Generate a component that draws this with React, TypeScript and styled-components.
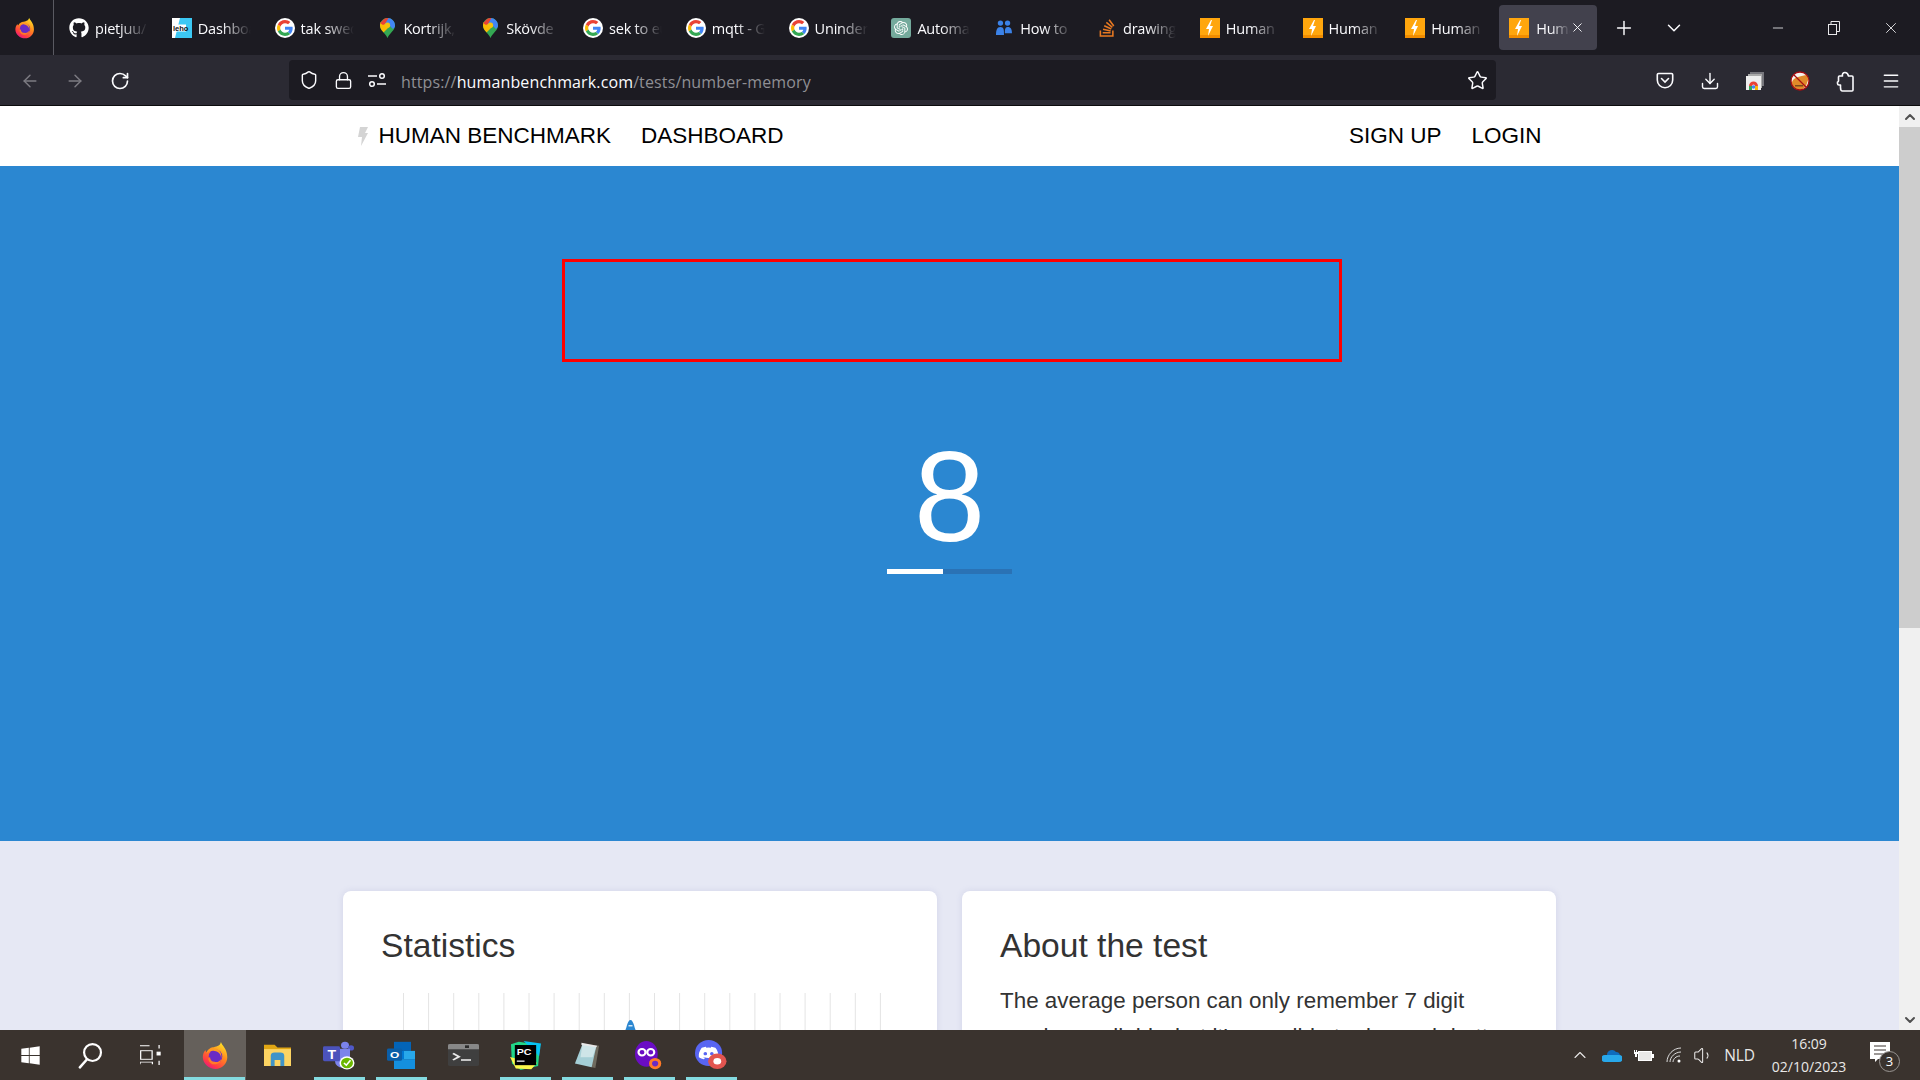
import React from "react";
import styled, { createGlobalStyle } from "styled-components";
import {
  ArrowLeft,
  ArrowRight,
  ChevronDown,
  ChevronUp,
  Download,
  Lock,
  Menu,
  Minus,
  Plus,
  RotateCw,
  Shield,
  Star,
  Volume1,
  X,
} from "lucide-react";
import { FaGithub, FaStackOverflow, FaDiscord, FaWindows } from "react-icons/fa";
import { SiOpenai } from "react-icons/si";

const GlobalStyle = createGlobalStyle`
  html, body {
    margin: 0;
    height: 100%;
    overflow: hidden;
    background: #1c1b22;
    font-family: "Liberation Sans", Arial, sans-serif;
  }
  * { box-sizing: border-box; }
`;

const Screen = styled.div`
  display: flex;
  flex-direction: column;
  width: 1920px;
  height: 1080px;
`;

/* browser chrome */
const TabBar = styled.div`
  display: flex;
  align-items: center;
  height: 55px;
  background: #1c1b22;
  color: #fbfbfe;
  font-family: "Open Sans", "Noto Sans", sans-serif;
`;

const BrandCell = styled.div`
  display: flex;
  align-items: center;
  justify-content: center;
  width: 54px;
  height: 55px;
  padding-right: 3px;
  border-right: 1px solid #5a5a62;
`;

const TabList = styled.div`
  display: flex;
  align-items: center;
  height: 45px;
`;

const Tab = styled.div<{ $active?: boolean }>`
  display: flex;
  align-items: center;
  gap: ${(p) => (p.$active ? "7px" : "6px")};
  width: ${(p) => (p.$active ? "98px" : "102.8px")};
  height: 45px;
  margin-left: ${(p) => (p.$active ? "6px" : "0")};
  padding-left: ${(p) => (p.$active ? "10px" : "15px")};
  border-radius: 4px;
  background: ${(p) => (p.$active ? "#42414d" : "transparent")};
`;

const Favicon = styled.span`
  display: flex;
  flex: none;
  align-items: center;
  justify-content: center;
  width: 20px;
  height: 20px;
`;

const TabLabel = styled.span<{ $short?: boolean }>`
  width: ${(p) => (p.$short ? "34px" : "53px")};
  padding-top: 2px;
  overflow: hidden;
  white-space: nowrap;
  font-size: 14.5px;
  letter-spacing: -0.2px;
  color: #fbfbfe;
  mask-image: linear-gradient(to right, #000 45%, transparent 100%);
`;

const TabClose = styled.span`
  display: flex;
  margin-left: -7px;
  color: #fbfbfe;
`;

const LeadButton = styled.span<{ $gap: number }>`
  display: flex;
  margin-left: ${(p) => p.$gap}px;
  color: #fbfbfe;
`;

const WindowControls = styled.div`
  display: flex;
  align-items: center;
  gap: 42px;
  margin-left: auto;
  padding-right: 20px;
  color: #e8e8ea;
`;

const Toolbar = styled.div`
  display: flex;
  align-items: center;
  height: 51px;
  padding-left: 20px;
  background: #2b2a33;
  border-bottom: 1px solid #0c0c0d;
  color: #fbfbfe;
`;

const NavButtons = styled.div`
  display: flex;
  align-items: center;
  gap: 25px;
  width: 269px;
  margin-top: 2px;
`;

const NavGlyph = styled.span<{ $dim?: boolean }>`
  display: flex;
  color: ${(p) => (p.$dim ? "#7d7c83" : "#fbfbfe")};
`;

const UrlBar = styled.div`
  display: flex;
  align-items: center;
  width: 1207px;
  height: 40px;
  padding: 0 8px 0 10px;
  border-radius: 4px;
  background: #1c1b22;
`;

const UrlIcons = styled.div`
  display: flex;
  align-items: center;
  gap: 15px;
  width: 102px;
`;

const UrlText = styled.div`
  padding-top: 3px;
  font-family: "Open Sans", "Noto Sans", sans-serif;
  font-size: 16px;
  letter-spacing: 0.13px;
  color: #8f8f94;
  b {
    font-weight: 400;
    color: #fbfbfe;
  }
`;

const BookmarkStar = styled.span`
  display: flex;
  margin-left: auto;
`;

const ToolbarActions = styled.div`
  display: flex;
  align-items: center;
  margin-left: 146px;
  margin-top: 2px;
`;

const ActionSlot = styled.span`
  display: flex;
  justify-content: center;
  width: 45.2px;
`;

/* page */
const Viewport = styled.div`
  display: flex;
  height: 924px;
  overflow: hidden;
`;

const Page = styled.main`
  flex: 1;
  min-width: 0;
  background: #e6e8f4;
`;

const SiteNav = styled.nav`
  display: flex;
  justify-content: center;
  height: 60px;
  background: #fff;
`;

const SiteNavInner = styled.div`
  display: flex;
  align-items: center;
  gap: 30px;
  width: 1184px;
`;

const SiteLink = styled.a`
  font-size: 22.5px;
  color: #000;
`;

const Logo = styled.span`
  display: flex;
  align-items: center;
  gap: 11px;
`;

const RightLinks = styled.div`
  display: flex;
  gap: 30px;
  margin-left: auto;
`;

const Hero = styled.section`
  display: flex;
  flex-direction: column;
  align-items: center;
  height: 675px;
  padding-top: 93px;
  background: #2b87d1;
  color: #fff;
`;

const AnswerFrame = styled.div`
  width: 780px;
  height: 103px;
  margin-left: 5px;
  border: 3px solid #ff0000;
`;

const Digit = styled.div`
  margin-top: 71px;
  font-size: 128px;
  line-height: 128px;
`;

const Countdown = styled.div`
  width: 125px;
  height: 5px;
  margin-top: 8px;
  background: #2a72b5;
`;

const CountdownFill = styled.div`
  width: 45%;
  height: 100%;
  background: #fff;
`;

const Cards = styled.div`
  display: flex;
  justify-content: center;
  gap: 25px;
  padding-top: 50px;
`;

const Card = styled.article`
  width: 594px;
  height: 500px;
  padding: 33px 38px;
  border-radius: 8px;
  background: #fff;
  box-shadow: 0 0 6px rgba(120, 130, 190, 0.18);
  color: #333;
`;

const CardTitle = styled.h2`
  margin: 0;
  font-size: 33.6px;
  font-weight: 400;
  line-height: 44px;
`;

const CardText = styled.p`
  margin: 15px 0 0;
  font-size: 22.4px;
  line-height: 36px;
`;

const Chart = styled.svg`
  display: block;
  margin: 25px 0 0 22px;
`;

const Scrollbar = styled.div`
  display: flex;
  flex: none;
  flex-direction: column;
  width: 21px;
  background: #f0f0f0;
`;

const ScrollStep = styled.div`
  display: flex;
  flex: none;
  align-items: center;
  justify-content: center;
  height: 21px;
  color: #505050;
`;

const ScrollThumb = styled.div`
  height: 501px;
  background: #cdcdcd;
`;

const ScrollRest = styled.div`
  flex: 1;
`;

/* windows taskbar */
const Taskbar = styled.footer`
  display: flex;
  align-items: stretch;
  height: 50px;
  background: #3a332e;
  color: #fff;
  font-family: "Open Sans", "Noto Sans", sans-serif;
`;

const SystemSlot = styled.div`
  display: flex;
  align-items: center;
  justify-content: center;
  width: 60px;
`;

const AppList = styled.div`
  display: flex;
  margin-left: 4px;
`;

const TaskSlot = styled.div<{ $active?: boolean; $running?: boolean }>`
  position: relative;
  display: flex;
  align-items: center;
  justify-content: center;
  width: 62px;
  background: ${(p) => (p.$active ? "#65605b" : "transparent")};
  &::after {
    content: "";
    display: ${(p) => (p.$running || p.$active ? "block" : "none")};
    position: absolute;
    left: ${(p) => (p.$active ? "0" : "5.5px")};
    right: ${(p) => (p.$active ? "1px" : "5.5px")};
    bottom: 0;
    height: 3px;
    background: #84dbe0;
  }
`;

const Tray = styled.div`
  display: flex;
  align-items: center;
  gap: 12px;
  margin-left: auto;
  padding-right: 4px;
`;

const Lang = styled.span`
  margin-left: -2px;
  font-size: 15.5px;
  letter-spacing: -0.1px;
  color: #e9e8e7;
`;

const Clock = styled.div`
  width: 84px;
  font-size: 14px;
  line-height: 23px;
  text-align: center;
  color: #e9e8e7;
`;

const Notify = styled.div`
  position: relative;
  width: 20px;
  height: 20px;
  margin: 0 26px 6px 7px;
`;

const NotifyBadge = styled.span`
  position: absolute;
  top: 9px;
  left: 9px;
  width: 21px;
  height: 21px;
  border: 1px solid #9a9693;
  border-radius: 50%;
  background: #3a332e;
  font-size: 13px;
  line-height: 19px;
  text-align: center;
  color: #fff;
`;

const GoogleIcon = () => (
  <svg width="20" height="20" viewBox="-6 -6 60 60">
    <circle cx="24" cy="24" r="30" fill="#fff" />
    <path fill="#EA4335" d="M24 9.5c3.54 0 6.71 1.22 9.21 3.6l6.85-6.85C35.9 2.38 30.47 0 24 0 14.62 0 6.51 5.38 2.56 13.22l7.98 6.19C12.43 13.72 17.74 9.5 24 9.5z" />
    <path fill="#4285F4" d="M46.98 24.55c0-1.57-.15-3.09-.38-4.55H24v9.02h12.94c-.58 2.96-2.26 5.48-4.78 7.18l7.73 6c4.51-4.18 7.09-10.36 7.09-17.65z" />
    <path fill="#FBBC05" d="M10.53 28.59c-.48-1.45-.76-2.99-.76-4.59s.27-3.14.76-4.59l-7.98-6.19C.92 16.46 0 20.12 0 24c0 3.88.92 7.54 2.56 10.78l7.97-6.19z" />
    <path fill="#34A853" d="M24 48c6.48 0 11.93-2.13 15.89-5.81l-7.73-6c-2.15 1.45-4.92 2.3-8.16 2.3-6.26 0-11.57-4.22-13.47-9.91l-7.98 6.19C6.51 42.62 14.62 48 24 48z" />
  </svg>
);

const MapsIcon = () => (
  <svg width="15" height="20" viewBox="0 0 15 20">
    <defs>
      <clipPath id="pinShape">
        <path d="M7.500 0C3.400 0 0 3.300 0 7.500c0 5 5 7 7.500 12.500C10 14.500 15 12.500 15 7.500 15 3.300 11.600 0 7.500 0z" />
      </clipPath>
    </defs>
    <g clipPath="url(#pinShape)">
      <rect width="15" height="20" fill="#34a853" />
      <path fill="#fbbc04" d="M0 4h5l5 4-7 7-3-2z" />
      <path fill="#ea4335" d="M0 5L6-1h4L5 6 3 7z" />
      <path fill="#4285f4" d="M9-1h7v9l-3 3-3-3-5-2z" />
      <circle cx="7.500" cy="7.200" r="2.600" fill="#f4c20d" />
    </g>
  </svg>
);

const LehoIcon = () => (
  <svg width="20" height="20" viewBox="0 0 20 20">
    <rect width="20" height="20" fill="#fff" />
    <path fill="#3cc8f4" d="M8 0h12v20H3z" />
    <path fill="#fff" d="M0 6.500h14v7H0z" />
    <text x="1" y="12.500" fontSize="7.500" fontWeight="700" fontFamily="Liberation Sans" fill="#111">leho</text>
  </svg>
);

const ChatIcon = () => (
  <svg width="20" height="20" viewBox="0 0 20 20">
    <rect width="20" height="20" rx="3" fill="#74aa9c" />
    <SiOpenai x="3" y="3" size="14" color="#fff" />
  </svg>
);

const PeopleIcon = () => (
  <svg width="18" height="16" viewBox="0 0 18 18" fill="#3b82e8">
    <circle cx="5" cy="3.500" r="3" />
    <circle cx="13" cy="3.500" r="3" />
    <path d="M0 17c0-5 1-9 5-9s4 3 4 9zM10 15c0-3 0-7 3-7 4 0 5 3 5 7z" />
  </svg>
);

const BoltIcon = () => (
  <svg width="20" height="20" viewBox="0 0 20 20">
    <rect width="20" height="20" fill="#ffa60d" />
    <rect y="17" width="20" height="3" fill="#f08c00" />
    <path fill="#fff" d="M11 2L6 11h3l-1 7 5-10h-3l2-6z" />
  </svg>
);

const FirefoxIcon = ({ size }: { size: number }) => (
  <svg width={size} height={size} viewBox="0 0 32 32">
    <defs>
      <linearGradient id="fxBody" x1="0.8" y1="0.05" x2="0.25" y2="1">
        <stop offset="0" stopColor="#ffe226" />
        <stop offset="0.4" stopColor="#ff8a1e" />
        <stop offset="0.8" stopColor="#ff3a45" />
        <stop offset="1" stopColor="#e3138a" />
      </linearGradient>
    </defs>
    <path fill="url(#fxBody)" d="M22 1c1 4 7 7 7 17 0 7-6 13-13 13S2 25 2 18c0-3 1-6 3-8 0 1 .6 2 1.200 2.500C7.500 9.500 10 7.500 13 7c3-1 8-1 9-6z" />
    <circle cx="16" cy="17" r="7.500" fill="#6a2bc4" />
    <path fill="#ff9a22" d="M6 14c2-3 6-4 9-3 4 .5 8 4 7 9 2-6-2-12-8-12-4 0-7 2-8 6z" />
    <path fill="#ff7a28" d="M8 20c1 5 6 7 10 5 3-1 4-3 4-5-1 2-4 4-7 3-3 0-5-2-5-5-1 0-2 1-2 2z" />
  </svg>
);

const PocketIcon = () => (
  <svg width="18" height="18" viewBox="0 0 18 18" fill="none" stroke="#fbfbfe" strokeWidth="1.600">
    <path d="M2.500 1.500h13a1.200 1.200 0 011.200 1.200V8a7.700 7.700 0 01-15.400 0V2.700a1.200 1.200 0 011.200-1.200z" />
    <path d="M5.500 6.500L9 10l3.500-3.500" strokeLinecap="round" />
  </svg>
);

const SiteSettingsIcon = () => (
  <svg width="18" height="16" viewBox="0 0 18 16" fill="none" stroke="#fbfbfe" strokeWidth="1.500">
    <path d="M0 4h9M9 12h9" />
    <circle cx="14" cy="4" r="2.300" />
    <circle cx="4" cy="12" r="2.300" />
  </svg>
);

const ChromeStackIcon = () => (
  <svg width="18" height="18" viewBox="0 0 18 18">
    <rect x="4" y="0" width="14" height="14" fill="#77777d" />
    <rect x="2" y="2" width="14" height="14" fill="#aaa" />
    <rect x="0" y="4" width="15" height="14" fill="#eee" />
    <path fill="#ea4335" d="M3 14a4.500 4.500 0 019 0H9a1.500 1.500 0 00-3 0z" />
    <path fill="#34a853" d="M3 14h3v4H3z" />
    <path fill="#fbbc04" d="M9 14h3v4H9z" />
    <circle cx="7.500" cy="15" r="1.800" fill="#4285f4" />
  </svg>
);

const BlockedFoxIcon = () => (
  <svg width="20" height="20" viewBox="0 0 20 20">
    <circle cx="10" cy="10" r="9" fill="#f7f3ee" />
    <path fill="#e08a2a" d="M2 12c0-3 3-5 6-6 4-1 6-2 9-2 2 3 1 6 0 8-1 4-4 7-8 7-4 0-7-3-7-7z" />
    <path fill="#7a4a1c" d="M5 14h8v1.500H5z" />
    <circle cx="10" cy="10" r="9" fill="none" stroke="#a80d12" strokeWidth="1.300" />
    <path d="M4 4l12 12" stroke="#a80d12" strokeWidth="1.300" />
  </svg>
);

const ExtensionIcon = () => (
  <svg width="18" height="21" viewBox="0 0 18 21" fill="none" stroke="#fbfbfe" strokeWidth="1.600" strokeLinejoin="round">
    <path d="M9 1.500c-2 0-3 1.500-2.500 3.500H3.500c-.6 0-1 .4-1 1v4c0 .5-.4 1-1 1v1.500c0 1 .5 1.500 1.500 1.500h1.500v2.500c0 2 .5 3.500 2 3.500h9.500c.6 0 1-.4 1-1V6c0-.6-.4-1-1-1h-3.500C12 3 11 1.500 9 1.500z" />
  </svg>
);

const RestoreIcon = () => (
  <svg width="12" height="14" viewBox="0 0 12 14" fill="none" stroke="#e8e8ea" strokeWidth="1">
    <rect x=".5" y="3.500" width="8" height="10" />
    <path d="M3 3.500V.5h8.500v10H8.500" />
  </svg>
);

const SearchIcon = () => (
  <svg width="28" height="27" viewBox="0 0 30 32" fill="none" stroke="#fff" strokeLinecap="round">
    <circle cx="18" cy="12.500" r="10" strokeWidth="2.600" />
    <path d="M11 21L3 30" strokeWidth="3" />
  </svg>
);

const TaskViewIcon = () => (
  <svg width="21" height="20" viewBox="0 0 22 28" preserveAspectRatio="none" fill="none" stroke="#fff" strokeWidth="1.300">
    <path d="M0 1h10M0 27v-3h13v3" />
    <rect x=".7" y="8" width="12" height="12" />
    <path d="M20 0v5M20 22v6" />
    <rect x="18" y="10" width="3" height="4" fill="#fff" />
  </svg>
);

const FolderIcon = () => (
  <svg width="27" height="22" viewBox="0 0 28 26" preserveAspectRatio="none">
    <path fill="#e0a614" d="M0 1h11l3 3h14v3H0z" />
    <path fill="#fcd462" d="M0 6h28v20H0z" />
    <path fill="#3f94c8" d="M7 26V14a4 4 0 014-4h6a4 4 0 014 4v12h-4v-7h-6v7z" />
  </svg>
);

const TeamsIcon = () => (
  <svg width="32" height="30" viewBox="0 0 32 34" preserveAspectRatio="none">
    <circle cx="22" cy="6" r="4" fill="#7b83eb" />
    <circle cx="28" cy="9" r="3" fill="#5059c9" />
    <path fill="#7b83eb" d="M12 10h15v14a6 6 0 01-15 0z" />
    <rect y="7" width="17" height="17" rx="1.500" fill="#4b53bc" />
    <text x="4.500" y="21" fontSize="14" fontWeight="700" fontFamily="Liberation Sans" fill="#fff">T</text>
    <circle cx="24" cy="26" r="7.500" fill="#fff" />
    <circle cx="24" cy="26" r="6" fill="#6bb700" />
    <path d="M21 26l2.300 2.500L27.500 23" stroke="#fff" strokeWidth="1.600" fill="none" />
  </svg>
);

const OutlookIcon = () => (
  <svg width="28" height="28" viewBox="0 0 28 34" preserveAspectRatio="none">
    <path fill="#0364b8" d="M7 1h17v11H7z" />
    <path fill="#28a8ea" d="M16 12h12v10H16z" />
    <path fill="#0078d4" d="M7 12h10v10H7z" />
    <path fill="#1490df" d="M7 22h21v12H7z" />
    <rect y="9" width="15" height="15" rx="1.500" fill="#0a5ea8" />
    <text x="3" y="21" fontSize="12" fontWeight="700" fontFamily="Liberation Sans" fill="#fff">O</text>
  </svg>
);

const TerminalIcon = () => (
  <svg width="31" height="22" viewBox="0 0 31 33" preserveAspectRatio="none">
    <rect width="31" height="33" rx="2" fill="#3f3f3f" />
    <path fill="#888" d="M0 2a2 2 0 012-2h27a2 2 0 012 2v6H0z" />
    <path fill="#2c2c2c" d="M17 2h4v4h-4z" />
    <path d="M5 14l6 5-6 5" fill="none" stroke="#e8e8e8" strokeWidth="2.400" />
    <path d="M13 24h10" stroke="#e8e8e8" strokeWidth="2.400" />
  </svg>
);

const PyCharmIcon = () => (
  <svg width="31" height="29" viewBox="0 0 32 36" preserveAspectRatio="none">
    <path fill="#21d789" d="M1 4l8-3 22 4-2 26-18 5-9-8z" />
    <path fill="#fcf84a" d="M0 20l6 14 16 1 6-8-14-3z" />
    <path fill="#07c3f2" d="M14 0l18 3-2 16z" />
    <rect x="5" y="5" width="22" height="25" fill="#000" />
    <text x="7" y="17" fontSize="11" fontWeight="700" fontFamily="Liberation Sans" fill="#fff">PC</text>
    <path d="M7 25h8" stroke="#fff" strokeWidth="1.500" />
  </svg>
);

const NotepadIcon = () => (
  <svg width="26" height="26" viewBox="0 0 28 34" preserveAspectRatio="none">
    <path fill="#6e6a5e" d="M9 2l18 3-4 29-4-1z" />
    <path fill="#a5cfd6" d="M9 3l15 3-5 27L1 28z" />
    <path fill="#dfeef0" d="M9 3l15 3-4 14-13 0z" opacity="0.7" />
    <path fill="#e8e8e8" d="M8 1l17 4-1 2L8 4z" />
  </svg>
);

const MaskIcon = () => (
  <svg width="28" height="29" viewBox="0 0 32 36" preserveAspectRatio="none">
    <ellipse cx="13" cy="16" rx="13" ry="16" fill="#6a0dc4" />
    <circle cx="8" cy="14" r="4" fill="none" stroke="#fff" strokeWidth="2.500" />
    <circle cx="18" cy="14" r="4" fill="none" stroke="#fff" strokeWidth="2.500" />
    <circle cx="23" cy="28" r="7" fill="#ff7a28" />
    <circle cx="23" cy="28" r="3.500" fill="#6a2bc4" />
  </svg>
);

const DiscordIcon = () => (
  <svg width="32" height="31" viewBox="0 0 33 38" preserveAspectRatio="none">
    <ellipse cx="14" cy="16" rx="14" ry="16" fill="#5865f2" />
    <FaDiscord x="3" y="5" size="22" color="#fff" />
    <circle cx="23" cy="26" r="9.500" fill="#e25550" />
    <circle cx="23" cy="26" r="4" fill="#fff" />
  </svg>
);

const CloudIcon = () => (
  <svg width="20" height="14" viewBox="0 0 20 14">
    <path fill="#0f6cbd" d="M5 7a5 5 0 019-3 4 4 0 014 3z" />
    <path fill="#28a8ea" d="M3 14a3 3 0 010-7h14a3.500 3.500 0 010 7z" />
  </svg>
);

const BatteryIcon = () => (
  <svg width="20" height="14" viewBox="0 0 20 14">
    <path d="M0 2h1v2h1V2h1v2h1v2H3v3H1V6H0z" fill="#fff" />
    <rect x="4.500" y="3.500" width="13" height="9" fill="#e9e8e7" stroke="#fff" />
    <rect x="18" y="6" width="2" height="4" fill="#fff" />
  </svg>
);

const WifiIcon = () => (
  <svg width="15" height="16" viewBox="0 0 15 16" fill="none" stroke="#ddd" strokeWidth="1">
    <path d="M1 15C1 8 7 1 15 1M4 15c0-5 5-10 11-10M7 15c0-3 3-6 7-6" />
    <circle cx="13" cy="14" r="1.500" fill="#fff" stroke="none" />
  </svg>
);

const NotifyBubble = () => (
  <svg width="20" height="20" viewBox="0 0 20 20">
    <path fill="#fff" d="M0 0h20v17H8l-3 3v-3H0z" />
    <path d="M4 4h12M4 8h12M4 12h12" stroke="#3a332e" strokeWidth="1" />
  </svg>
);

const tabs = [
  { icon: <FaGithub size={20} color="#fff" />, label: "pietjuu/" },
  { icon: <LehoIcon />, label: "Dashboard" },
  { icon: <GoogleIcon />, label: "tak sweden" },
  { icon: <MapsIcon />, label: "Kortrijk, Belgium" },
  { icon: <MapsIcon />, label: "Skövde" },
  { icon: <GoogleIcon />, label: "sek to eur" },
  { icon: <GoogleIcon />, label: "mqtt - Google" },
  { icon: <GoogleIcon />, label: "Uninder" },
  { icon: <ChatIcon />, label: "Automatic" },
  { icon: <PeopleIcon />, label: "How to" },
  { icon: <FaStackOverflow size={20} color="#e87922" />, label: "drawing" },
  { icon: <BoltIcon />, label: "Human" },
  { icon: <BoltIcon />, label: "Human" },
  { icon: <BoltIcon />, label: "Human" },
];

const taskApps = [
  { icon: <FirefoxIcon size={29} />, active: true, running: true },
  { icon: <FolderIcon />, active: false, running: false },
  { icon: <TeamsIcon />, active: false, running: true },
  { icon: <OutlookIcon />, active: false, running: true },
  { icon: <TerminalIcon />, active: false, running: false },
  { icon: <PyCharmIcon />, active: false, running: true },
  { icon: <NotepadIcon />, active: false, running: true },
  { icon: <MaskIcon />, active: false, running: true },
  { icon: <DiscordIcon />, active: false, running: true },
];

const gridLines = Array.from({ length: 20 }, (_, i) => i * 25.1 + 0.5);

const App = () => (
  <Screen>
    <GlobalStyle />
    <TabBar>
      <BrandCell>
        <FirefoxIcon size={22} />
      </BrandCell>
      <TabList>
        {tabs.map((tab, index) => (
          <Tab key={index}>
            <Favicon>{tab.icon}</Favicon>
            <TabLabel>{tab.label}</TabLabel>
          </Tab>
        ))}
        <Tab $active>
          <Favicon>
            <BoltIcon />
          </Favicon>
          <TabLabel $short>Human Benchmark</TabLabel>
          <TabClose>
            <X size={15} strokeWidth={1.5} />
          </TabClose>
        </Tab>
      </TabList>
      <LeadButton $gap={16}>
        <Plus size={22} strokeWidth={1.6} />
      </LeadButton>
      <LeadButton $gap={28}>
        <ChevronDown size={22} strokeWidth={1.6} />
      </LeadButton>
      <WindowControls>
        <Minus size={16} strokeWidth={1.3} />
        <RestoreIcon />
        <X size={18} strokeWidth={1.2} />
      </WindowControls>
    </TabBar>

    <Toolbar>
      <NavButtons>
        <NavGlyph $dim>
          <ArrowLeft size={20} strokeWidth={1.7} />
        </NavGlyph>
        <NavGlyph $dim>
          <ArrowRight size={20} strokeWidth={1.7} />
        </NavGlyph>
        <NavGlyph>
          <RotateCw size={20} strokeWidth={2} />
        </NavGlyph>
      </NavButtons>
      <UrlBar>
        <UrlIcons>
          <Shield size={20} strokeWidth={1.7} />
          <Lock size={19} strokeWidth={1.7} />
          <SiteSettingsIcon />
        </UrlIcons>
        <UrlText>
          https://<b>humanbenchmark.com</b>/tests/number-memory
        </UrlText>
        <BookmarkStar>
          <Star size={21} strokeWidth={1.7} />
        </BookmarkStar>
      </UrlBar>
      <ToolbarActions>
        <ActionSlot>
          <PocketIcon />
        </ActionSlot>
        <ActionSlot>
          <Download size={20} strokeWidth={1.7} />
        </ActionSlot>
        <ActionSlot>
          <ChromeStackIcon />
        </ActionSlot>
        <ActionSlot>
          <BlockedFoxIcon />
        </ActionSlot>
        <ActionSlot>
          <ExtensionIcon />
        </ActionSlot>
        <ActionSlot>
          <Menu size={20} strokeWidth={1.7} />
        </ActionSlot>
      </ToolbarActions>
    </Toolbar>

    <Viewport>
      <Page>
        <SiteNav>
          <SiteNavInner>
            <Logo>
              <svg width="10" height="19" viewBox="0 0 10 19">
                <path fill="#d4d4d4" d="M2 0h8L7 6h3L3 19l1-9H0z" />
              </svg>
              <SiteLink>HUMAN BENCHMARK</SiteLink>
            </Logo>
            <SiteLink>DASHBOARD</SiteLink>
            <RightLinks>
              <SiteLink>SIGN UP</SiteLink>
              <SiteLink>LOGIN</SiteLink>
            </RightLinks>
          </SiteNavInner>
        </SiteNav>

        <Hero>
          <AnswerFrame />
          <Digit>8</Digit>
          <Countdown>
            <CountdownFill />
          </Countdown>
        </Hero>

        <Cards>
          <Card>
            <CardTitle>Statistics</CardTitle>
            <Chart width="480" height="260" viewBox="0 0 480 260">
              {gridLines.map((x) => (
                <line key={x} x1={x} x2={x} y1="0" y2="260" stroke="#e4e4e4" />
              ))}
              <path
                fill="#2b87d1"
                d="M217 44c4-2 6-8 7-12 1-3 2-5 3.500-5s2.500 2 3.500 5c1 4 3 10 7 12z"
              />
              <path fill="#cfe4f6" d="M225.500 32h4v1.500h-4z" />
            </Chart>
          </Card>
          <Card>
            <CardTitle>About the test</CardTitle>
            <CardText>
              The average person can only remember 7 digit numbers reliably, but it's possible to do much better using mnemonic techniques.
            </CardText>
          </Card>
        </Cards>
      </Page>
      <Scrollbar>
        <ScrollStep>
          <ChevronUp size={16} strokeWidth={3} />
        </ScrollStep>
        <ScrollThumb />
        <ScrollRest />
        <ScrollStep>
          <ChevronDown size={16} strokeWidth={3} />
        </ScrollStep>
      </Scrollbar>
    </Viewport>

    <Taskbar>
      <SystemSlot>
        <FaWindows size={21} color="#fff" />
      </SystemSlot>
      <SystemSlot>
        <SearchIcon />
      </SystemSlot>
      <SystemSlot>
        <TaskViewIcon />
      </SystemSlot>
      <AppList>
        {taskApps.map((app, index) => (
          <TaskSlot key={index} $active={app.active} $running={app.running}>
            {app.icon}
          </TaskSlot>
        ))}
      </AppList>
      <Tray>
        <ChevronUp size={20} strokeWidth={1.3} color="#e9e8e7" />
        <CloudIcon />
        <BatteryIcon />
        <WifiIcon />
        <Volume1 size={21} strokeWidth={1.2} color="#e9e8e7" />
        <Lang>NLD</Lang>
        <Clock>
          16:09
          <br />
          02/10/2023
        </Clock>
        <Notify>
          <NotifyBubble />
          <NotifyBadge>3</NotifyBadge>
        </Notify>
      </Tray>
    </Taskbar>
  </Screen>
);

export default App;
